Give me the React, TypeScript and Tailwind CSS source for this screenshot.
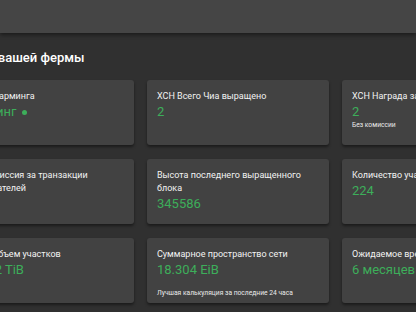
import React from 'react'

type Card = {
  label: string
  value?: string
  sub?: string
  subGap?: string
  dot?: boolean
}

const cards: Card[] = [
  { label: 'Статус фарминга', value: 'Фарминг', dot: true },
  { label: 'XCH Всего Чиа выращено', value: '2' },
  { label: 'XCH Награда за блок', value: '2', sub: 'Без комиссии', subGap: 'mt-0' },
  { label: 'XCH Комиссия за транзакции пользователей' },
  { label: 'Высота последнего выращенного блока', value: '345586' },
  { label: 'Количество участников', value: '224' },
  { label: 'Общий объем участков', value: '21.762 TiB' },
  {
    label: 'Суммарное пространство сети',
    value: '18.304 EiB',
    sub: 'Лучшая калькуляция за последние 24 часа',
    subGap: 'mt-[10px]',
  },
  { label: 'Ожидаемое время до победы', value: '6 месяцев' },
]

const StatCard = ({ label, value, sub, subGap, dot }: Card) => (
  <div className="h-[65px] overflow-hidden rounded-[3px] bg-[#424242] px-[10px] pt-[10px] shadow-[0_2px_3px_rgba(0,0,0,0.45)]">
    <p className="text-[9px] leading-[13px] text-[#f2f2f2]">{label}</p>
    {value && (
      <p className="flex items-center gap-[5px] text-[13px] leading-[18px] text-[#3dae5a]">
        {value}
        {dot && <span className="inline-block h-[5px] w-[5px] rounded-full bg-[#3dae5a]" />}
      </p>
    )}
    {sub && <p className={`${subGap} text-[6.7px] leading-[9px] text-[#eaeaea]`}>{sub}</p>}
  </div>
)

export default function App() {
  return (
    <div className="h-[312px] w-[416px] overflow-hidden bg-[#303030] font-['Roboto',sans-serif]">
      <div className="relative z-10 h-[33px] bg-[#454545] shadow-[0_2px_4px_rgba(0,0,0,0.45)]" />
      <div className="ml-[-48px] w-[600px]">
        <h1 className="pl-[5px] pt-[16px] text-[13px] font-medium leading-[18px] text-white">
          Обзор вашей фермы
        </h1>
        <div className="mt-[13px] grid grid-cols-[182px_182px_182px] gap-x-[13px] gap-y-[14px]">
          {cards.map((c) => (
            <StatCard key={c.label} {...c} />
          ))}
        </div>
      </div>
    </div>
  )
}
